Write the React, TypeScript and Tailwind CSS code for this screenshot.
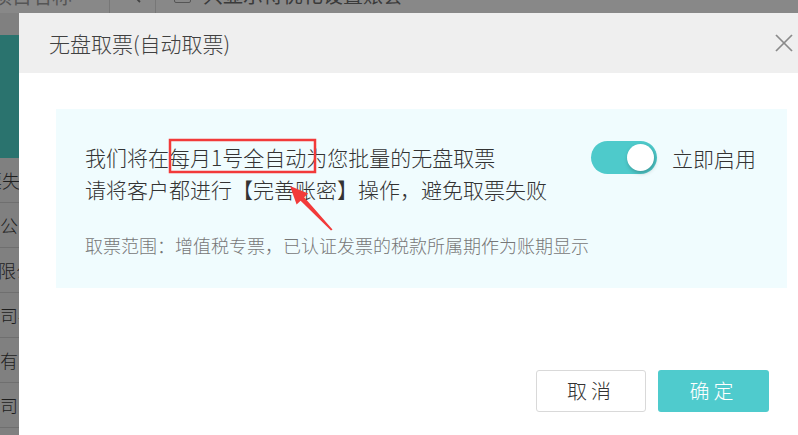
import React from "react";

const font = { fontFamily: '"Noto Sans CJK SC", "Noto Sans", sans-serif' };

function BackgroundPage() {
  const rows = [
    { text: "票失败", ml: "-ml-[16px]" },
    { text: "公司", ml: "ml-0" },
    { text: "有限公司", ml: "-ml-[20px]" },
    { text: "司-", ml: "ml-0" },
    { text: "有限", ml: "ml-0" },
    { text: "司", ml: "ml-0" },
  ];
  return (
    <div className="flex h-full w-full flex-col bg-[#808080]" style={font}>
      <div className="flex h-[13px] shrink-0 items-end overflow-hidden bg-[#888888] text-[20px] text-[#3a3a3a]">
        <div className="flex h-[40px] w-[110px] shrink-0 items-center border-r border-[#777] pl-[2px] leading-none">
          <span className="-ml-[10px] pt-[6px] text-[#555]">项目名称</span>
        </div>
        <div className="flex h-[40px] w-[46px] shrink-0 items-center justify-center border-r border-[#777]">
          <svg width="16" height="16" viewBox="0 0 16 16" className="mt-[4px]">
            <circle cx="6" cy="6" r="5" fill="none" stroke="#444" strokeWidth="1.6" />
            <line x1="10" y1="10" x2="15" y2="15" stroke="#444" strokeWidth="1.8" />
          </svg>
        </div>
        <div className="flex h-[40px] items-center pl-[18px]">
          <span className="mt-[2px] h-[17px] w-[17px] rounded-[2px] border border-[#555] bg-[#888]" />
          <span className="ml-[12px] pt-[4px] leading-none">只显示待优化设置账套</span>
        </div>
      </div>
      <div className="flex w-[19px] flex-col overflow-hidden">
        <div className="h-[22px] shrink-0 bg-[#808080]" />
        <div className="h-[123px] shrink-0 bg-[#2a736e]" />
        {rows.map((r, i) => (
          <div
            key={i}
            className="flex h-[45px] shrink-0 items-center overflow-hidden whitespace-nowrap border-b border-[#6f6f6f] bg-[#808080] text-[18px] font-light leading-none text-[#1e1e1e]"
          >
            <span className={r.ml}>{r.text}</span>
          </div>
        ))}
      </div>
    </div>
  );
}

function Toggle() {
  return (
    <div className="relative h-[33px] w-[66px] shrink-0 rounded-full bg-[#4ecacb]">
      <div className="absolute right-[3px] top-[3px] h-[27px] w-[27px] rounded-full bg-white shadow-[1px_2px_4px_rgba(0,0,0,0.25)]" />
    </div>
  );
}

export default function App() {
  return (
    <div className="relative h-[435px] w-[798px] overflow-hidden" style={font}>
      <BackgroundPage />
      <div className="absolute left-[19px] top-[13px] flex h-[440px] w-[805px] flex-col bg-white font-light">
        <div className="flex h-[60px] shrink-0 items-center justify-between bg-[#efefef] pl-[30px] pr-[31px]">
          <span className="text-[21px] leading-none text-[#404040]">无盘取票(自动取票)</span>
          <svg width="18" height="18" viewBox="0 0 18 18">
            <line x1="1" y1="1" x2="17" y2="17" stroke="#8a8a8a" strokeWidth="1.7" />
            <line x1="17" y1="1" x2="1" y2="17" stroke="#8a8a8a" strokeWidth="1.7" />
          </svg>
        </div>
        <div className="flex flex-col px-[37px] pt-[36px]">
          <div className="flex h-[179px] items-start justify-between bg-[#f0fcfe] pl-[29px] pr-[31px] pt-[32px]">
            <div className="flex flex-col">
              <p className="text-[21px] leading-[32px] text-[#333]">我们将在每月1号全自动为您批量的无盘取票</p>
              <p className="text-[21px] leading-[32px] text-[#333]">请将客户都进行【完善账密】操作，避免取票失败</p>
              <p className="mt-[28px] text-[18px] leading-[24px] text-[#777]">
                取票范围：增值税专票，已认证发票的税款所属期作为账期显示
              </p>
            </div>
            <div className="flex items-center gap-[15px]">
              <Toggle />
              <span className="text-[21px] leading-[32px] text-[#333]">立即启用</span>
            </div>
          </div>
          <div className="flex justify-end gap-[12px] pr-[18px] pt-[82px]">
            <button className="flex h-[42px] w-[110px] items-center justify-center rounded-[3px] border border-[#d9d9d9] bg-white text-[20px] tracking-[4px] text-[#333]">
              取消
            </button>
            <button className="flex h-[42px] w-[111px] items-center justify-center rounded-[3px] bg-[#4fcbcd] text-[20px] tracking-[4px] text-white">
              确定
            </button>
          </div>
        </div>
      </div>
      <svg
        className="pointer-events-none absolute left-0 top-0"
        width="798"
        height="435"
        viewBox="0 0 798 435"
      >
        <rect x="170" y="140" width="145" height="32" fill="none" stroke="#f23a3a" strokeWidth="2.5" />
        <polygon
          points="290,186 308.2,193.5 304.2,197.3 332.5,229.5 331,230.5 300.6,200.7 296.6,204.5"
          fill="#f23a3a"
        />
      </svg>
    </div>
  );
}
